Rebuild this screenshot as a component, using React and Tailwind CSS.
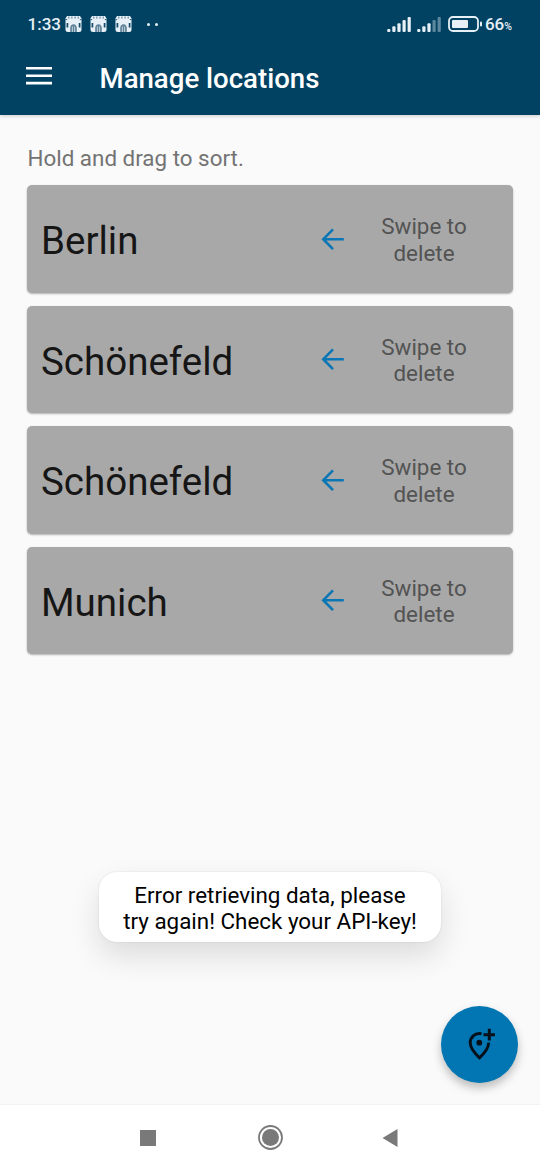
const locations = ["Berlin", "Schönefeld", "Schönefeld", "Munich"];

const ItchIcon = () => (
    <svg width="17" height="18" viewBox="0 0 17 18">
        <path d="M2 1H15L16.5 3.5V14.5Q16.5 17 14 17H3Q0.5 17 0.5 14.5V3.5Z" fill="#e6f0f6" />
        <path d="M3.8 1.5V3.6M6.9 1.5V3.6M10.1 1.5V3.6M13.2 1.5V3.6" stroke="#4d7690" strokeWidth="1" fill="none" />
        <path d="M0.5 4.6H2.2M14.8 4.6H16.5" stroke="#25587a" strokeWidth="1" />
        <path d="M2.4 8V12.6M14.6 8V12.6" stroke="#17496b" strokeWidth="1.7" />
        <path d="M5.2 17V12.8Q5.5 9.6 8.5 9.2Q11.5 9.6 11.8 12.8V17Z" fill="#5f8299" />
        <path d="M7.4 17V11.5M9.6 17V11.5" stroke="#d5e2ea" strokeWidth="0.8" />
    </svg>
);

const Signal = ({ level }) => (
    <svg width="25" height="17" viewBox="0 0 25 17" fill="#e6f0f6">
        <rect x="0.2" y="13" width="3.2" height="3" rx="1" />
        <rect x="5.3" y="10.3" width="3.2" height="5.7" rx="1" />
        <rect x="10.4" y="7.3" width="3.2" height="8.7" rx="1" />
        <rect x="15.5" y="4" width="3.2" height="12" rx="1" opacity={level > 3 ? 1 : 0.4} />
        <rect x="20.6" y="1" width="3.2" height="15" rx="1" opacity={level > 3 ? 1 : 0.4} />
    </svg>
);

const StatusBar = () => (
    <div className="flex h-12 items-center justify-between pr-[28px] pl-[27.5px] text-[#e6f0f6]">
        <div className="flex items-center">
            <span className="w-[37px] text-[17px] leading-5 font-medium">1:33</span>
            <div className="flex gap-[8px]">
                <ItchIcon />
                <ItchIcon />
                <ItchIcon />
            </div>
            <div className="ml-[15px] flex gap-[5px]">
                <span className="size-[3px] rounded-full bg-[#e6f0f6]" />
                <span className="size-[3px] rounded-full bg-[#e6f0f6]" />
            </div>
        </div>
        <div className="flex items-center">
            <Signal level={5} />
            <span className="w-[5px]" />
            <Signal level={3} />
            <svg className="ml-[6px]" width="35" height="16" viewBox="0 0 35 16">
                <rect x="1" y="1" width="29" height="14" rx="4" fill="none" stroke="#e6f0f6" strokeWidth="1.8" />
                <rect x="4" y="4" width="16" height="8" rx="1" fill="#e6f0f6" />
                <rect x="32" y="5.5" width="2" height="5" rx="1" fill="#e6f0f6" />
            </svg>
            <span className="ml-[2px] text-[17px] leading-5 font-medium">66</span>
            <span className="mt-[5px] text-[10.5px] leading-3 font-medium">%</span>
        </div>
    </div>
);

const LocationCard = ({ name }) => (
    <li className="flex h-[107.5px] items-center rounded-[5px] bg-[#a8a8a8] pl-[14px] shadow-[0_1px_2px_rgba(0,0,0,0.3)]">
        <span className="w-[280px] pt-[5px] text-[38.5px] leading-[46px] text-[#161616]">{name}</span>
        <svg width="24" height="24" viewBox="0 0 24 24" fill="none" stroke="#0a76b4" strokeWidth="2.6">
            <path d="M22.8 12.2H3M12 2.3L2.3 12.2L12 22.1" />
        </svg>
        <p className="ml-[29px] w-[100px] pt-[2px] text-center text-[22.4px] leading-[26.4px] text-[#535353]">
            Swipe to delete
        </p>
    </li>
);

const App = () => {
    return (
        <div className="relative flex h-[1170px] w-[540px] flex-col overflow-hidden bg-[#fafafa] font-['Roboto',sans-serif]">
            <header className="h-[115px] bg-[#014263] shadow-[0_1px_4px_rgba(0,0,0,0.2)]">
                <StatusBar />
                <div className="flex items-start pl-[26px] text-white">
                    <svg className="mt-[18px]" width="26" height="20" viewBox="0 0 26 20" stroke="white" strokeWidth="2.6">
                        <path d="M0 2.3H26M0 9.7H26M0 17.1H26" />
                    </svg>
                    <h1 className="ml-[47.5px] pt-[15px] text-[27.6px] leading-8 font-medium">Manage locations</h1>
                </div>
            </header>

            <main className="flex-1 px-[27px] pt-[29px]">
                <p className="pl-[0.5px] text-[22.4px] leading-[28px] text-[#737373]">Hold and drag to sort.</p>
                <ul className="mt-[13px] flex flex-col gap-[13px]">
                    {locations.map((name, i) => (
                        <LocationCard key={i} name={name} />
                    ))}
                </ul>
            </main>

            {/* toast */}
            <div className="absolute top-[872px] left-[99px] h-[70px] w-[342px] rounded-[18px] bg-white pt-[10px] text-center text-[22.4px] leading-[26.4px] text-black shadow-[0_14px_30px_rgba(0,0,0,0.12),0_0_2px_rgba(0,0,0,0.12)]">
                Error retrieving data, please
                <br />
                try again! Check your API-key!
            </div>

            <button className="absolute top-[1006px] left-[441px] flex size-[77px] items-center justify-center rounded-full bg-[#0276b3] shadow-[0_5px_10px_rgba(0,0,0,0.25)]">
                <svg width="33" height="33" viewBox="0 0 33 33" fill="none" stroke="#05101a" strokeWidth="3">
                    <path d="M18.5 5.7C11.5 4.4 7.2 9.5 7.2 14.8C7.2 19.5 10.8 24.5 16.5 29.8C22.2 24.5 25.8 19.5 25.6 14.6" />
                    <path d="M20.5 6.7H32M26.3 0.8V12.6" />
                    <circle cx="16.3" cy="14.7" r="2.9" fill="#05101a" stroke="none" />
                </svg>
            </button>

            <nav className="flex h-[65px] items-center bg-white pl-[140px] shadow-[0_-1px_0_#f3f3f3]">
                <span className="size-4 bg-[#797979]" />
                <svg className="ml-[102px]" width="25" height="25" viewBox="0 0 25 25">
                    <circle cx="12.5" cy="12.5" r="11.5" fill="none" stroke="#797979" strokeWidth="1.8" />
                    <circle cx="12.5" cy="12.5" r="8.5" fill="#797979" />
                </svg>
                <svg className="ml-[99px]" width="16" height="20" viewBox="0 0 16 20">
                    <path d="M15.5 1V19L0.5 10Z" fill="#797979" />
                </svg>
            </nav>
        </div>
    );
};

export default App;
